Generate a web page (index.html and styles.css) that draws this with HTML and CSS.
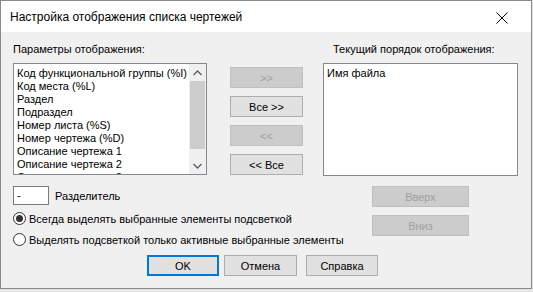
FILE: index.html
```html
<!DOCTYPE html>
<html lang="ru">
<head>
  <meta charset="UTF-8" />
  <title>Настройка отображения списка чертежей</title>
  <link rel="stylesheet" href="styles.css">
</head>
<body>
  <div class="window">
    <div class="titlebar">
      <span class="title">Настройка отображения списка чертежей</span>
      <span class="close">
        <svg width="12" height="12" viewBox="0 0 12 12"><path d="M0.5 0.5 L11.5 11.5 M11.5 0.5 L0.5 11.5" stroke="#000" stroke-width="1" fill="none"/></svg>
      </span>
    </div>

    <div class="client">
      <div class="lists">
        <div class="col-left">
          <div class="label">Параметры отображения:</div>
          <div class="listbox">
            <ul class="items">
              <li>Код функциональной группы (%I)</li>
              <li>Код места (%L)</li>
              <li>Раздел</li>
              <li>Подраздел</li>
              <li>Номер листа (%S)</li>
              <li>Номер чертежа (%D)</li>
              <li>Описание чертежа 1</li>
              <li>Описание чертежа 2</li>
              <li>Описание чертежа 3</li>
            </ul>
            <div class="scrollbar">
              <div class="sb-arrow">
                <svg width="9" height="6" viewBox="0 0 9 6"><path d="M0.5 5 L4.5 1 L8.5 5" stroke="#606060" stroke-width="1.4" fill="none"/></svg>
              </div>
              <div class="sb-track"><div class="sb-thumb"></div></div>
              <div class="sb-arrow">
                <svg width="9" height="6" viewBox="0 0 9 6"><path d="M0.5 1 L4.5 5 L8.5 1" stroke="#606060" stroke-width="1.4" fill="none"/></svg>
              </div>
            </div>
          </div>
        </div>

        <div class="col-mid">
          <button class="btn" disabled>&gt;&gt;</button>
          <button class="btn">Все &gt;&gt;</button>
          <button class="btn" disabled>&lt;&lt;</button>
          <button class="btn">&lt;&lt; Все</button>
        </div>

        <div class="col-right">
          <div class="label label-right">Текущий порядок отображения:</div>
          <div class="listbox listbox-right">
            <ul class="items">
              <li>Имя файла</li>
            </ul>
          </div>
        </div>
      </div>

      <div class="options">
        <div class="opt-left">
          <div class="sep-row">
            <span class="sep-input">-</span>
            <span class="sep-label">Разделитель</span>
          </div>
          <div class="radio">
            <span class="radio-mark checked"></span>
            <span>Всегда выделять выбранные элементы подсветкой</span>
          </div>
          <div class="radio">
            <span class="radio-mark"></span>
            <span>Выделять подсветкой только активные выбранные элементы</span>
          </div>
        </div>
        <div class="opt-right">
          <button class="btn btn-wide" disabled>Вверх</button>
          <button class="btn btn-wide" disabled>Вниз</button>
        </div>
      </div>

      <div class="actions">
        <button class="btn btn-default">OK</button>
        <button class="btn btn-cancel">Отмена</button>
        <button class="btn btn-help">Справка</button>
      </div>
    </div>
  </div>
</body>
</html>
```

FILE: styles.css
```css
body {
  margin: 0;
  background: #e6e6e6;
  font-family: "Liberation Sans", Arial, sans-serif;
  font-size: 11px;
  color: #000;
}
.window {
  width: 530px;
  height: 287px;
  border: 1px solid #8a8a8a;
  background: #f0f0f0;
  display: flex;
  flex-direction: column;
}
.titlebar {
  height: 31px;
  background: #fff;
  display: flex;
  align-items: center;
  justify-content: space-between;
  padding: 0 23px 0 9px;
}
.title {
  font-size: 12px;
  padding-top: 1px;
}
.close {
  display: flex;
  padding-top: 2px;
}
.client {
  padding: 11px 0 0 12px;
}
.lists {
  display: flex;
}
.label {
  height: 13px;
  line-height: 13px;
  margin-bottom: 7px;
}
.col-left {
  width: 194px;
}
.listbox {
  height: 110px;
  border: 1px solid #828790;
  background: #fff;
  display: flex;
  overflow: hidden;
}
.items {
  list-style: none;
  margin: 0;
  padding: 3px 0 0 3px;
  flex: 1;
  line-height: 13px;
  white-space: nowrap;
  overflow: hidden;
}
.scrollbar {
  width: 17px;
  background: #f0f0f0;
  display: flex;
  flex-direction: column;
}
.sb-arrow {
  height: 17px;
  display: flex;
  align-items: center;
  justify-content: center;
}
.sb-track {
  flex: 1;
  padding: 0 1px 8px;
}
.sb-thumb {
  height: 100%;
  background: #cdcdcd;
}
.col-mid {
  width: 73px;
  margin: 0 20px 0 23px;
  padding-top: 24px;
  display: flex;
  flex-direction: column;
  gap: 8px;
}
.btn {
  height: 21px;
  padding: 0;
  font-family: inherit;
  font-size: 11px;
  color: #000;
  background: #e1e1e1;
  border: 1px solid #adadad;
  border-radius: 0;
}
.btn:disabled {
  background: #cccccc;
  border-color: #bfbfbf;
  color: #a0a0a0;
}
.col-right {
  width: 195px;
}
.label-right {
  padding-left: 10px;
}
.listbox-right {
  height: 111px;
}
.options {
  display: flex;
  margin-top: 10px;
}
.opt-left {
  width: 359px;
}
.sep-row {
  display: flex;
  align-items: center;
  height: 19px;
}
.sep-input {
  width: 31px;
  height: 17px;
  line-height: 17px;
  padding-left: 3px;
  border: 1px solid #7a7a7a;
  background: #fff;
}
.sep-label {
  margin-left: 6px;
}
.radio {
  display: flex;
  align-items: center;
  gap: 3px;
  height: 15px;
  margin-top: 6px;
}
.radio-mark {
  width: 11px;
  height: 11px;
  border: 1px solid #333;
  border-radius: 50%;
  background: #fff;
  display: flex;
  align-items: center;
  justify-content: center;
}
.radio-mark.checked::after {
  content: "";
  width: 7px;
  height: 7px;
  border-radius: 50%;
  background: #333;
}
.opt-right {
  display: flex;
  flex-direction: column;
  gap: 8px;
}
.btn-wide {
  width: 97px;
}
.actions {
  display: flex;
  margin-top: 8px;
  padding-left: 134px;
}
.btn-default {
  width: 72px;
  border: 2px solid #0078d7;
}
.btn-cancel {
  width: 73px;
  margin-left: 5px;
}
.btn-help {
  width: 72px;
  margin-left: 9px;
}
```
